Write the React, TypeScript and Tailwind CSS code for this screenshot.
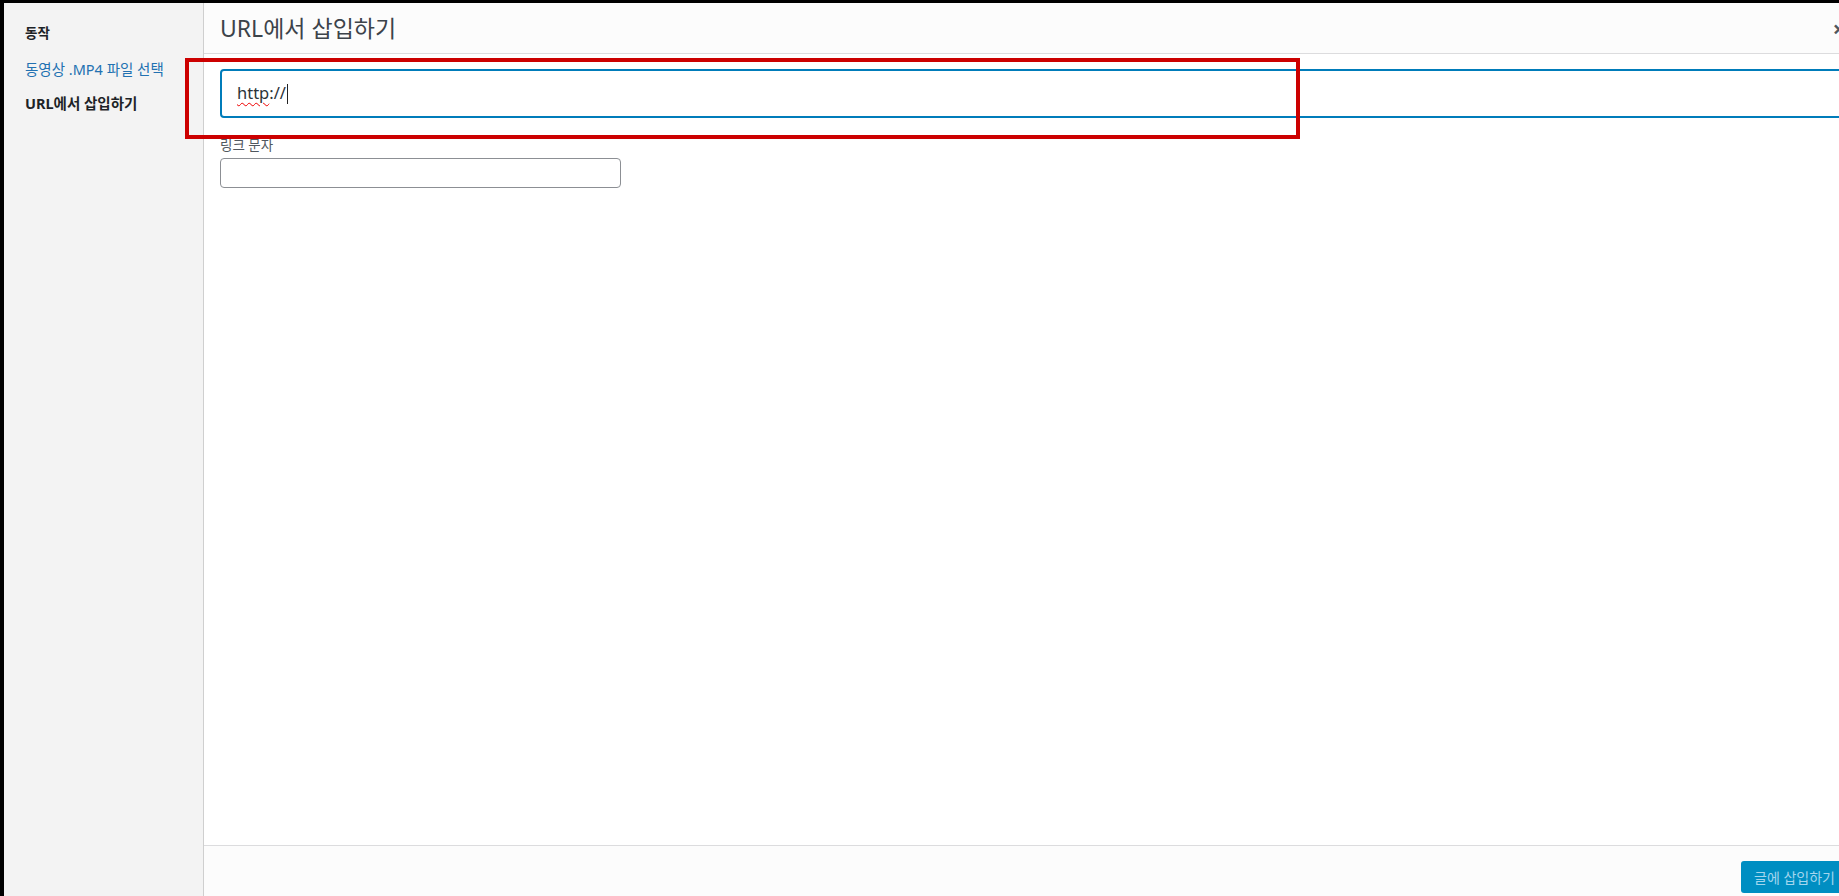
import React from "react";

const font = { fontFamily: '"Noto Sans", "Noto Sans CJK KR", sans-serif' };

function Sidebar() {
  return (
    <aside className="w-[200px] shrink-0 border-r border-[#cfcfcf] bg-[#f3f3f3] pl-[21px] pt-[18px]">
      <h3 className="text-[13.5px] font-bold leading-[24px] text-[#1d2327]">동작</h3>
      <nav className="mt-[12px] flex flex-col gap-[10px]">
        <a className="text-[14.5px] leading-[24px] text-[#2271b1]">동영상 .MP4 파일 선택</a>
        <a className="text-[14.5px] font-bold leading-[24px] text-[#1d2327]">URL에서 삽입하기</a>
      </nav>
    </aside>
  );
}

function UrlField() {
  return (
    <div className="flex h-[49px] w-full items-center rounded-[4px] border-2 border-[#007cba] bg-white pl-[15px] text-[16.5px] text-[#2c3338]">
      <span className="underline decoration-[#e00] decoration-wavy decoration-1 underline-offset-[3px]">http</span>
      <span>://</span>
      <span className="ml-[1px] inline-block h-[20px] w-px bg-[#222]" />
    </div>
  );
}

export default function App() {
  return (
    <div className="relative h-[896px] w-full overflow-hidden bg-black pl-[4px] pt-[3px]" style={font}>
      <div className="flex h-[893px] w-[1860px]">
        <Sidebar />

        <div className="flex min-w-0 flex-1 flex-col bg-white">
          <header className="flex h-[51px] shrink-0 items-center justify-between border-b border-[#dcdcde] bg-[#fcfcfc] pl-[16px]">
            <h1 className="text-[23px] font-normal text-[#3c434a]">URL에서 삽입하기</h1>
            <button type="button" className="flex h-[50px] w-[50px] items-center justify-center text-[22px] font-bold text-[#50575e]">
              ×
            </button>
          </header>

          <div className="flex-1 pl-[16px] pr-[16px] pt-[15px]">
            <UrlField />
            <label className="mt-[18px] block text-[13.5px] leading-[18px] text-[#50575e]">링크 문자</label>
            <div className="mt-[4px] h-[30px] w-[401px] rounded-[4px] border border-[#8c8f94] bg-white" />
          </div>

          <footer className="flex h-[51px] shrink-0 items-start justify-end border-t border-[#dcdcde] bg-[#fcfcfc] pr-[16px] pt-[15px]">
            <button type="button" className="h-[32px] rounded-[3px] bg-[#008ec2] px-[13px] text-[14px] text-[#a4d6ee]">
              글에 삽입하기
            </button>
          </footer>
        </div>
      </div>

      <div className="pointer-events-none absolute left-[185px] top-[58px] h-[81px] w-[1115px] border-4 border-[#cc0000]" />
    </div>
  );
}
